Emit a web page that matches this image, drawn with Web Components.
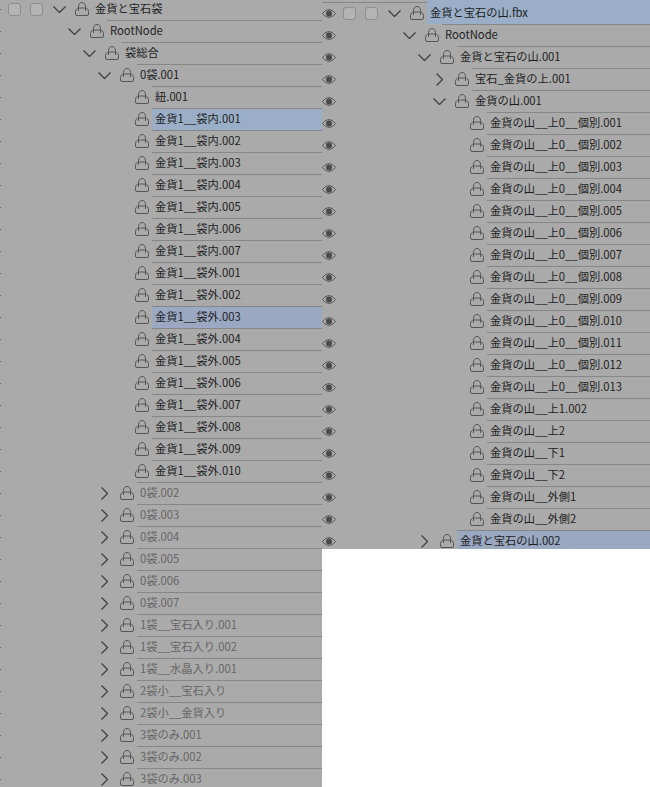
<!DOCTYPE html>
<html>
<head>
<meta charset="utf-8">
<style>
  html, body { margin: 0; background: #fff; }
  body { font-family: "Noto Sans CJK JP", "Noto Sans", sans-serif; }
</style>
</head>
<body>
<outliner-app></outliner-app>

<template id="row-tpl">
  <style>
    :host {
      display: flex;
      align-items: stretch;
      height: 22px;
      font-size: 11.25px;
      color: #1e1e1e;
    }
    :host([muted]) { color: #666; }
    :host([ruled]) { background: linear-gradient(#878787 1px, transparent 1px); }
    .eye { width: 14px; margin-right: 7px; display: flex; align-items: center; flex: none; }
    .checks { display: flex; gap: 9px; align-items: center; width: 35px; flex: none; }
    .check {
      width: 11px; height: 11px;
      border: 1px solid #8e8e8e; border-radius: 3px;
      background: #b4b4b4;
    }
    .tree { display: flex; flex: 1; min-width: 0; }
    .twist { width: 18px; margin-left: 7px; margin-right: 7px; display: flex; align-items: center; justify-content: center; flex: none; }
    .bag { width: 14px; display: flex; align-items: center; flex: none; }
    .name {
      flex: 1;
      margin-left: 3px;
      padding-left: 3px;
      line-height: 19px;
      white-space: nowrap;
      border-top: 1px solid #878787;
    }
    :host([selected]) .name { background: #9aafc7; }
    :host([selected="dim"]) .name { background: #9aa8c1; }
    /* the selected top row runs up to the panel edge, above the rule */
    :host([ruled]) .name { margin-top: -2px; padding-top: 3px; border-top: 0; }
    svg { display: block; fill: none; }
  </style>
  <span class="eye"><svg width="14" height="9" viewBox="0 0 14 9">
    <path d="M.5 4.500C3 1.500 5 .7 7 .7s4 .8 6.500 3.800C11 7.500 9 8.300 7 8.300S3 7.500.5 4.500Z" stroke="#555"/>
    <circle cx="7" cy="4.500" r="3" fill="#4a4a4a"/>
  </svg></span>
  <span class="checks"><span class="check"></span><span class="check"></span></span>
  <span class="tree">
    <span class="twist"></span>
    <span class="bag"><svg width="14" height="14" viewBox="0 0 14 14" stroke="#555">
      <path d="M.5 12V9.500C.5 7.500 2 6 4 6H10C12 6 13.500 7.500 13.500 9.500V12A1.500 1.500 0 0 1 12 13.500H2A1.500 1.500 0 0 1 .5 12Z"/>
      <path d="M3.500 9V4.500C3.500 2 5 .5 7 .5S10.500 2 10.500 4.500V9"/>
    </svg></span>
    <span class="name"></span>
  </span>
</template>

<script>
const OPEN = '<svg width="13" height="7" viewBox="0 0 13 7" stroke="#404040" stroke-width="1.300"><path d="M.5 .5l6 6 6-6"/></svg>'
const CLOSED = '<svg width="7" height="13" viewBox="0 0 7 13" stroke="#404040" stroke-width="1.300"><path d="M.5 .5l6 6-6 6"/></svg>'

class TreeRow extends HTMLElement {
  constructor () {
    super()
    const root = this.attachShadow({ mode: 'open' })
    root.appendChild(document.getElementById('row-tpl').content.cloneNode(true))
  }

  connectedCallback () {
    const root = this.shadowRoot
    const level = Number(this.getAttribute('level') || 0)
    const twist = this.getAttribute('twist')
    root.querySelector('.tree').style.paddingLeft = level * 15 + 'px'
    root.querySelector('.twist').innerHTML = twist === 'open' ? OPEN : twist === 'closed' ? CLOSED : ''
    root.querySelector('.name').textContent = this.getAttribute('label')
    // only the first row of a panel carries the check boxes visibly
    if (!this.hasAttribute('checks')) root.querySelector('.checks').style.visibility = 'hidden'
  }
}

class TreePanel extends HTMLElement {
  constructor () {
    super()
    this.attachShadow({ mode: 'open' }).innerHTML = `
      <style>
        :host { display: block; overflow: hidden; background: #aaa; flex: none; }
        .scroll { display: flex; flex-direction: column; }
      </style>
      <div class="scroll"><slot></slot></div>`
  }
}

const LEFT = [
  [0, 'open', '金貨と宝石袋'], [1, 'open', 'RootNode'], [2, 'open', '袋総合'], [3, 'open', '0袋.001'],
  [4, '', '紐.001'], [4, '', '金貨1__袋内.001', 'on'],
  [4, '', '金貨1__袋内.002'], [4, '', '金貨1__袋内.003'], [4, '', '金貨1__袋内.004'], [4, '', '金貨1__袋内.005'],
  [4, '', '金貨1__袋内.006'], [4, '', '金貨1__袋内.007'], [4, '', '金貨1__袋外.001'], [4, '', '金貨1__袋外.002'],
  [4, '', '金貨1__袋外.003', 'dim'], [4, '', '金貨1__袋外.004'], [4, '', '金貨1__袋外.005'], [4, '', '金貨1__袋外.006'],
  [4, '', '金貨1__袋外.007'], [4, '', '金貨1__袋外.008'], [4, '', '金貨1__袋外.009'], [4, '', '金貨1__袋外.010']
]
const LEFT_MUTED = ['0袋.002', '0袋.003', '0袋.004', '0袋.005', '0袋.006', '0袋.007', '1袋__宝石入り.001', '1袋__宝石入り.002',
  '1袋__水晶入り.001', '2袋小__宝石入り', '2袋小__金貨入り', '3袋のみ.001', '3袋のみ.002', '3袋のみ.003']

const RIGHT = [
  [0, 'open', '金貨と宝石の山.fbx', 'on'], [1, 'open', 'RootNode'], [2, 'open', '金貨と宝石の山.001'],
  [3, 'closed', '宝石_金貨の上.001'], [3, 'open', '金貨の山.001']
]
for (let i = 1; i <= 13; i++) RIGHT.push([4, '', '金貨の山__上0__個別.' + String(i).padStart(3, '0')])
RIGHT.push([4, '', '金貨の山__上1.002'], [4, '', '金貨の山__上2'], [4, '', '金貨の山__下1'], [4, '', '金貨の山__下2'],
  [4, '', '金貨の山__外側1'], [4, '', '金貨の山__外側2'], [2, 'closed', '金貨と宝石の山.002', 'dim'])

class OutlinerApp extends HTMLElement {
  constructor () {
    super()
    this.attachShadow({ mode: 'open' }).innerHTML = `
      <style>
        :host { display: flex; align-items: flex-start; width: 650px; height: 787px; overflow: hidden; }
        .left { width: 322px; height: 787px; }
        .right { width: 328px; height: 549px; }
        .left-rows { display: block; margin: -2px 0 0 -13px; width: 335px; }
        .right-rows { display: block; margin-top: 2px; }
      </style>
      <tree-panel class="left"><div class="left-rows"></div></tree-panel>
      <tree-panel class="right"><div class="right-rows"></div></tree-panel>`
  }

  connectedCallback () {
    const fill = (box, rows, ruled) => rows.forEach(([level, twist, label, sel, muted], i) => {
      const row = document.createElement('tree-row')
      row.setAttribute('level', level)
      row.setAttribute('twist', twist)
      row.setAttribute('label', label)
      if (sel) row.setAttribute('selected', sel)
      if (muted) row.setAttribute('muted', '')
      if (i === 0) row.setAttribute('checks', '')
      if (i === 0 && ruled) row.setAttribute('ruled', '')
      box.appendChild(row)
    })
    fill(this.shadowRoot.querySelector('.left-rows'),
      LEFT.concat(LEFT_MUTED.map(label => [3, 'closed', label, '', true])))
    fill(this.shadowRoot.querySelector('.right-rows'), RIGHT, true)
  }
}

customElements.define('tree-row', TreeRow)
customElements.define('tree-panel', TreePanel)
customElements.define('outliner-app', OutlinerApp)
</script>
</body>
</html>
